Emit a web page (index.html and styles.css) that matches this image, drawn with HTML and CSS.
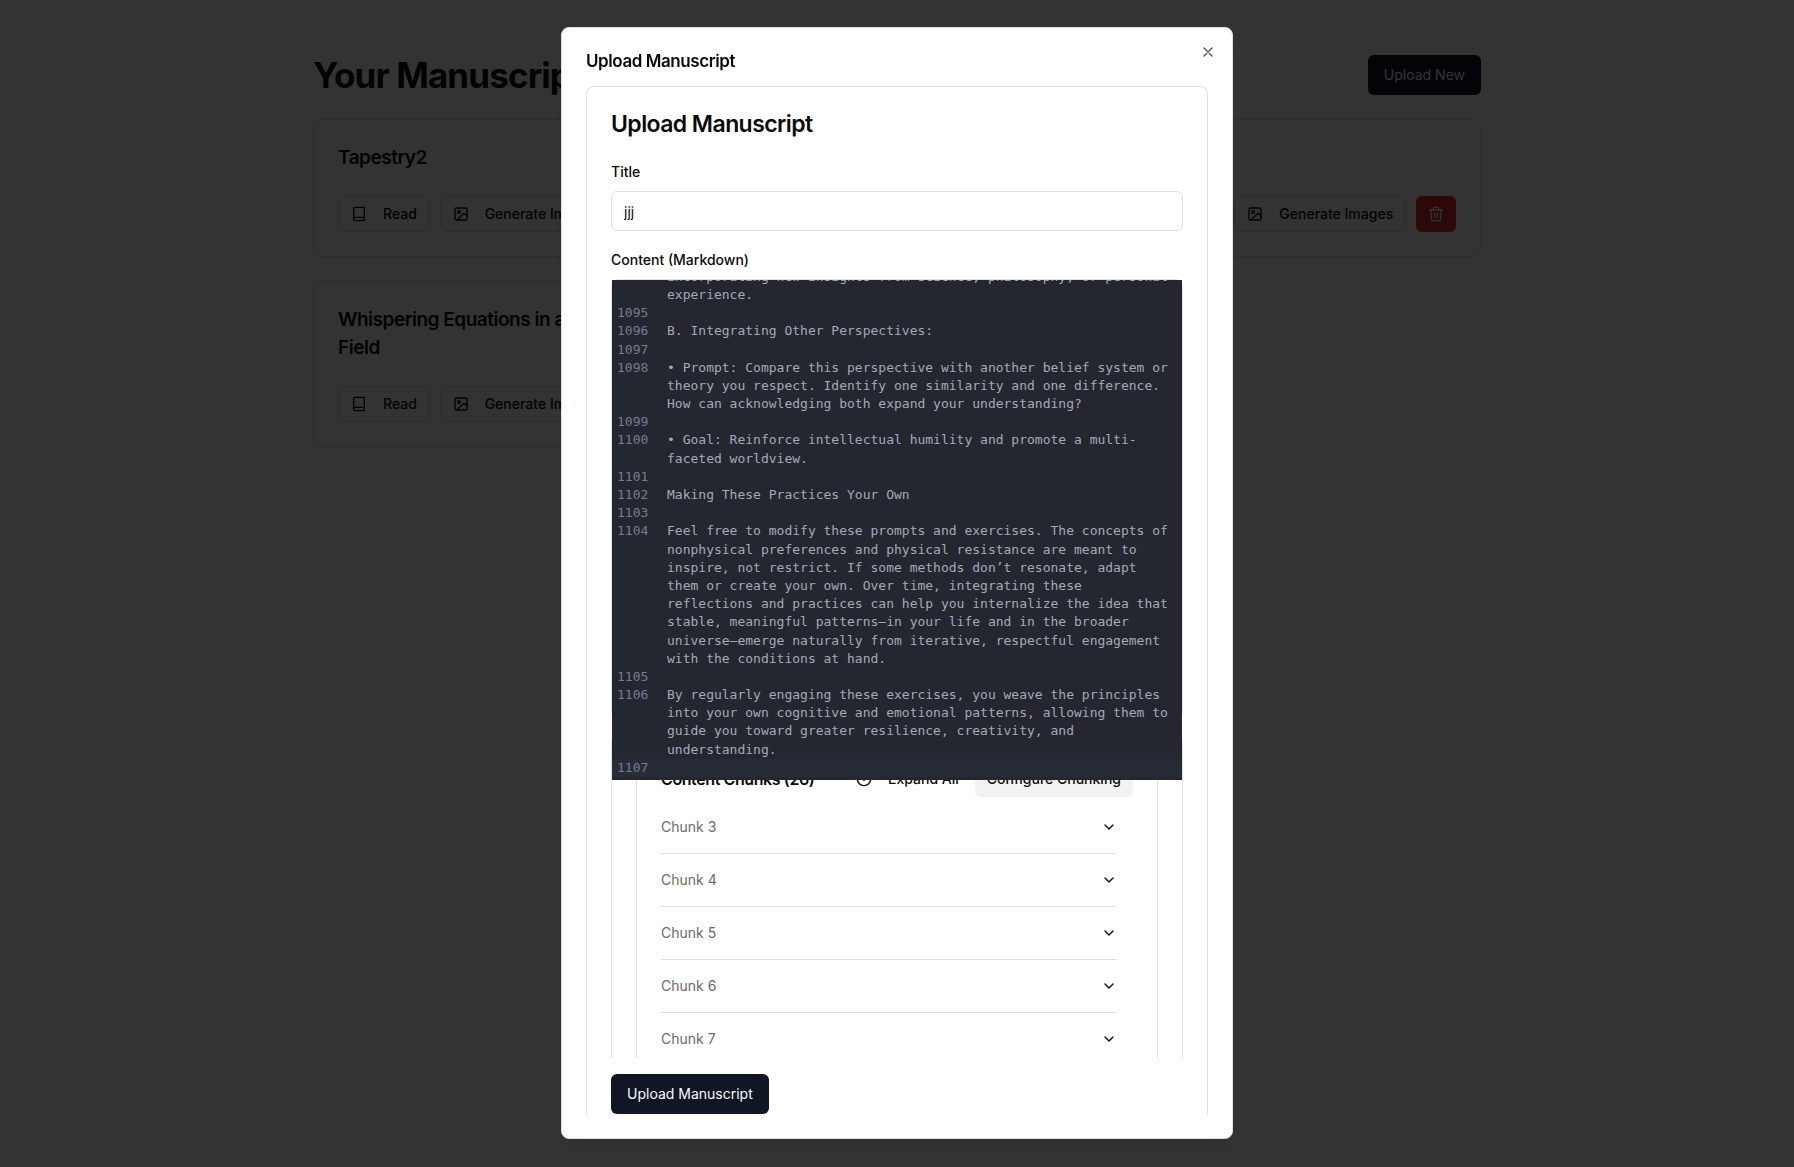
FILE: index.html
```html
<!DOCTYPE html>
<html lang="en">
<head>
<meta charset="utf-8">
<meta name="viewport" content="width=device-width, initial-scale=1">
<title>Your Manuscripts</title>
<link rel="stylesheet" href="styles.css">
</head>
<body>
<svg class="sprite" aria-hidden="true">
  <symbol id="i-book" viewBox="0 0 24 24"><path d="M4 19.5v-15A2.5 2.5 0 0 1 6.500 2H19a1 1 0 0 1 1 1v18a1 1 0 0 1-1 1H6.500a1 1 0 0 1 0-5H20"/></symbol>
  <symbol id="i-image" viewBox="0 0 24 24"><rect width="18" height="18" x="3" y="3" rx="2"/><circle cx="9" cy="9" r="2"/><path d="m21 15-3.086-3.086a2 2 0 0 0-2.828 0L6 21"/></symbol>
  <symbol id="i-trash" viewBox="0 0 24 24"><path d="M3 6h18M19 6v14c0 1-1 2-2 2H7c-1 0-2-1-2-2V6M8 6V4c0-1 1-2 2-2h4c1 0 2 1 2 2v2M10 11v6M14 11v6"/></symbol>
  <symbol id="i-x" viewBox="0 0 24 24"><path d="M18 6 6 18M6 6l12 12"/></symbol>
  <symbol id="i-down" viewBox="0 0 24 24"><path d="m6 9 6 6 6-6"/></symbol>
  <symbol id="i-circle-down" viewBox="0 0 24 24"><circle cx="12" cy="12" r="10"/><path d="m16 10-4 4-4-4"/></symbol>
</svg>

<main class="page">
  <header class="page-header">
    <h1>Your Manuscripts</h1>
    <button class="btn btn-primary" type="button">Upload New</button>
  </header>
  <section class="grid">
    <article class="card manuscript">
      <h2>Tapestry2</h2>
      <div class="actions">
        <button class="btn btn-outline" type="button"><svg class="icon"><use href="#i-book"/></svg>Read</button>
        <button class="btn btn-outline" type="button"><svg class="icon"><use href="#i-image"/></svg>Generate Images</button>
        <button class="btn btn-danger" type="button" aria-label="Delete"><svg class="icon"><use href="#i-trash"/></svg></button>
      </div>
    </article>
    <article class="card manuscript">
      <h2>Tapestry</h2>
      <div class="actions">
        <button class="btn btn-outline" type="button"><svg class="icon"><use href="#i-book"/></svg>Read</button>
        <button class="btn btn-outline" type="button"><svg class="icon"><use href="#i-image"/></svg>Generate Images</button>
        <button class="btn btn-danger" type="button" aria-label="Delete"><svg class="icon"><use href="#i-trash"/></svg></button>
      </div>
    </article>
    <article class="card manuscript">
      <h2>Notes</h2>
      <div class="actions">
        <button class="btn btn-outline" type="button"><svg class="icon"><use href="#i-book"/></svg>Read</button>
        <button class="btn btn-outline" type="button"><svg class="icon"><use href="#i-image"/></svg>Generate Images</button>
        <button class="btn btn-danger" type="button" aria-label="Delete"><svg class="icon"><use href="#i-trash"/></svg></button>
      </div>
    </article>
    <article class="card manuscript">
      <h2>Whispering Equations in a Living Field</h2>
      <div class="actions">
        <button class="btn btn-outline" type="button"><svg class="icon"><use href="#i-book"/></svg>Read</button>
        <button class="btn btn-outline" type="button"><svg class="icon"><use href="#i-image"/></svg>Generate Images</button>
        <button class="btn btn-danger" type="button" aria-label="Delete"><svg class="icon"><use href="#i-trash"/></svg></button>
      </div>
    </article>
  </section>
</main>

<div class="overlay">
  <div class="dialog" role="dialog" aria-modal="true" aria-labelledby="dialog-title">
    <h2 class="dialog-title" id="dialog-title">Upload Manuscript</h2>
    <button class="close" type="button" aria-label="Close"><svg class="icon"><use href="#i-x"/></svg></button>
    <div class="dialog-body">
      <form class="card form">
        <h3 class="form-title">Upload Manuscript</h3>
        <div class="field">
          <label for="title">Title</label>
          <input id="title" type="text" value="jjj">
        </div>
        <div class="field">
          <label id="content-label">Content (Markdown)</label>
          <div class="editor-frame">
            <div class="editor" role="textbox" aria-multiline="true" aria-labelledby="content-label">
              <div class="line"><span class="no">1094</span><span>• Goal: Keep the practice alive by revisiting it regularly and incorporating new insights from science, philosophy, or personal experience.</span></div>
              <div class="line"><span class="no">1095</span></div>
              <div class="line"><span class="no">1096</span><span>B. Integrating Other Perspectives:</span></div>
              <div class="line"><span class="no">1097</span></div>
              <div class="line"><span class="no">1098</span><span>• Prompt: Compare this perspective with another belief system or theory you respect. Identify one similarity and one difference. How can acknowledging both expand your understanding?</span></div>
              <div class="line"><span class="no">1099</span></div>
              <div class="line"><span class="no">1100</span><span>• Goal: Reinforce intellectual humility and promote a multi-faceted worldview.</span></div>
              <div class="line"><span class="no">1101</span></div>
              <div class="line"><span class="no">1102</span><span>Making These Practices Your Own</span></div>
              <div class="line"><span class="no">1103</span></div>
              <div class="line"><span class="no">1104</span><span>Feel free to modify these prompts and exercises. The concepts of nonphysical preferences and physical resistance are meant to inspire, not restrict. If some methods don’t resonate, adapt them or create your own. Over time, integrating these reflections and practices can help you internalize the idea that stable, meaningful patterns—in your life and in the broader universe—emerge naturally from iterative, respectful engagement with the conditions at hand.</span></div>
              <div class="line"><span class="no">1105</span></div>
              <div class="line"><span class="no">1106</span><span>By regularly engaging these exercises, you weave the principles into your own cognitive and emotional patterns, allowing them to guide you toward greater resilience, creativity, and understanding.</span></div>
              <div class="line active"><span class="no">1107</span></div>
            </div>
          </div>
        </div>
        <section class="card chunk-outer">
          <div class="card chunk-card">
            <div class="chunk-header">
              <h4>Content Chunks (26)</h4>
              <div class="chunk-tools">
                <button class="btn btn-ghost" type="button"><svg class="icon"><use href="#i-circle-down"/></svg>Expand All</button>
                <button class="btn btn-secondary" type="button">Configure Chunking</button>
              </div>
            </div>
            <div class="chunk-list">
              <button class="chunk" type="button">Chunk 3<svg class="icon"><use href="#i-down"/></svg></button>
              <button class="chunk" type="button">Chunk 4<svg class="icon"><use href="#i-down"/></svg></button>
              <button class="chunk" type="button">Chunk 5<svg class="icon"><use href="#i-down"/></svg></button>
              <button class="chunk" type="button">Chunk 6<svg class="icon"><use href="#i-down"/></svg></button>
              <button class="chunk" type="button">Chunk 7<svg class="icon"><use href="#i-down"/></svg></button>
            </div>
          </div>
        </section>
        <footer class="form-footer">
          <button class="btn btn-primary" type="submit">Upload Manuscript</button>
        </footer>
      </form>
    </div>
  </div>
</div>
</body>
</html>
```

FILE: styles.css
```css
* { box-sizing: border-box; }

:root {
  --border: #e0e0df;
  --text: #0c0a09;
  --muted: #6f6863;
  --primary: #101623;
}

body {
  margin: 0;
  height: 100vh;
  overflow: hidden;
  background: #fff;
  color: var(--text);
  font: 14px/20px Inter, "Liberation Sans", sans-serif;
}

h1, h2, h3, h4 {
  margin: 0;
  font-weight: 600;
  letter-spacing: -0.025em;
}

button, input { font: inherit; color: inherit; }

.sprite { display: none; }

.icon {
  width: 16px;
  height: 16px;
  flex: none;
  fill: none;
  stroke: currentColor;
  stroke-width: 2;
  stroke-linecap: round;
  stroke-linejoin: round;
}

.card {
  background: #fff;
  border: 1px solid var(--border);
  border-radius: 8px;
}

.btn {
  display: inline-flex;
  align-items: center;
  justify-content: center;
  gap: 16px;
  height: 36px;
  padding: 0 12px;
  border: 0;
  border-radius: 6px;
  background: none;
  font-weight: 500;
  white-space: nowrap;
}

.btn-primary {
  height: 40px;
  padding: 0 16px;
  background: var(--primary);
  color: #f8fafc;
  font-weight: 400;
}

.btn-outline { border: 1px solid var(--border); background: #fff; }
.btn-danger { background: #e22b2b; color: #fafafa; }
.btn-secondary { background: #f3f3f1; }

.page {
  max-width: 1200px;
  margin: 0 auto;
  padding: 55px 16px 32px;
}

.page-header {
  display: flex;
  align-items: center;
  justify-content: space-between;
  margin-bottom: 24px;
}

.page-header h1 {
  font-size: 35px;
  line-height: 40px;
  font-weight: 700;
}

.grid {
  display: grid;
  grid-template-columns: repeat(3, 1fr);
  align-items: start;
  gap: 24px;
}

.manuscript {
  display: flex;
  flex-direction: column;
  gap: 24px;
  padding: 24px;
}

.manuscript h2 { font-size: 19px; line-height: 28px; }

.actions { display: flex; justify-content: space-between; }

.overlay {
  position: fixed;
  inset: 0;
  display: flex;
  justify-content: center;
  padding: 27px 16px 28px;
  background: rgba(0, 0, 0, 0.8);
}

.dialog {
  position: relative;
  display: flex;
  flex-direction: column;
  gap: 16px;
  width: 100%;
  max-width: 672px;
  padding: 24px 24px 23px;
  background: #fff;
  border: 1px solid var(--border);
  border-radius: 8px;
  box-shadow: 0 10px 15px -3px rgba(0, 0, 0, 0.1);
}

.dialog-title { font-size: 17px; line-height: 18px; }

.close {
  position: absolute;
  top: 16px;
  right: 16px;
  display: flex;
  padding: 0;
  border: 0;
  background: none;
  opacity: 0.7;
}

.dialog-body {
  flex: 1;
  min-height: 0;
  overflow: hidden;
}

.form {
  display: flex;
  flex-direction: column;
  gap: 16px;
  height: 100%;
  padding: 24px 24px 0;
  border-bottom: 0;
  border-radius: 8px 8px 0 0;
}

.form-title {
  padding-bottom: 6px;
  font-size: 23px;
  line-height: 26px;
}

.field {
  display: flex;
  flex-direction: column;
  gap: 6px;
}

.field label { line-height: 26px; font-weight: 500; }

.field input {
  height: 40px;
  padding: 0 12px;
  border: 1px solid var(--border);
  border-radius: 6px;
  background: #fff;
  outline: 0;
}

.editor-frame {
  position: relative;
  z-index: 1;
  height: 440px;
  border: 1px solid var(--border);
  border-radius: 8px;
}

.editor {
  display: flex;
  flex-direction: column;
  justify-content: flex-end;
  height: 500px;
  padding-bottom: 3px;
  overflow: hidden;
  background: #24272f;
  color: #a3aab8;
  font: 13px/1.4 "DejaVu Sans Mono", "Liberation Mono", monospace;
}

.line {
  display: grid;
  grid-template-columns: 50px 1fr;
  flex: none;
  padding: 0 10px 0 5px;
}

.line.active { background: #282c38; }

.no { color: #747d90; }

.chunk-outer {
  flex: 1;
  min-height: 0;
  padding: 0 24px;
  overflow: hidden;
  border-bottom: 0;
  border-radius: 8px 8px 0 0;
}

.chunk-card {
  padding: 24px;
}

.chunk-header {
  display: flex;
  align-items: center;
  justify-content: space-between;
}

.chunk-header h4 { font-size: 16px; line-height: 24px; }

.chunk-tools { display: flex; gap: 4px; }

.chunk-list {
  display: flex;
  flex-direction: column;
  padding: 4px 16px 0 0;
}

.chunk {
  display: flex;
  align-items: center;
  justify-content: space-between;
  padding: 16px 0;
  border: 0;
  border-bottom: 1px solid var(--border);
  background: none;
  color: var(--muted);
}

.chunk .icon { color: var(--text); }

.form-footer {
  margin-top: -16px;
  padding: 16px 0 1px;
  background: #fff;
}
```
